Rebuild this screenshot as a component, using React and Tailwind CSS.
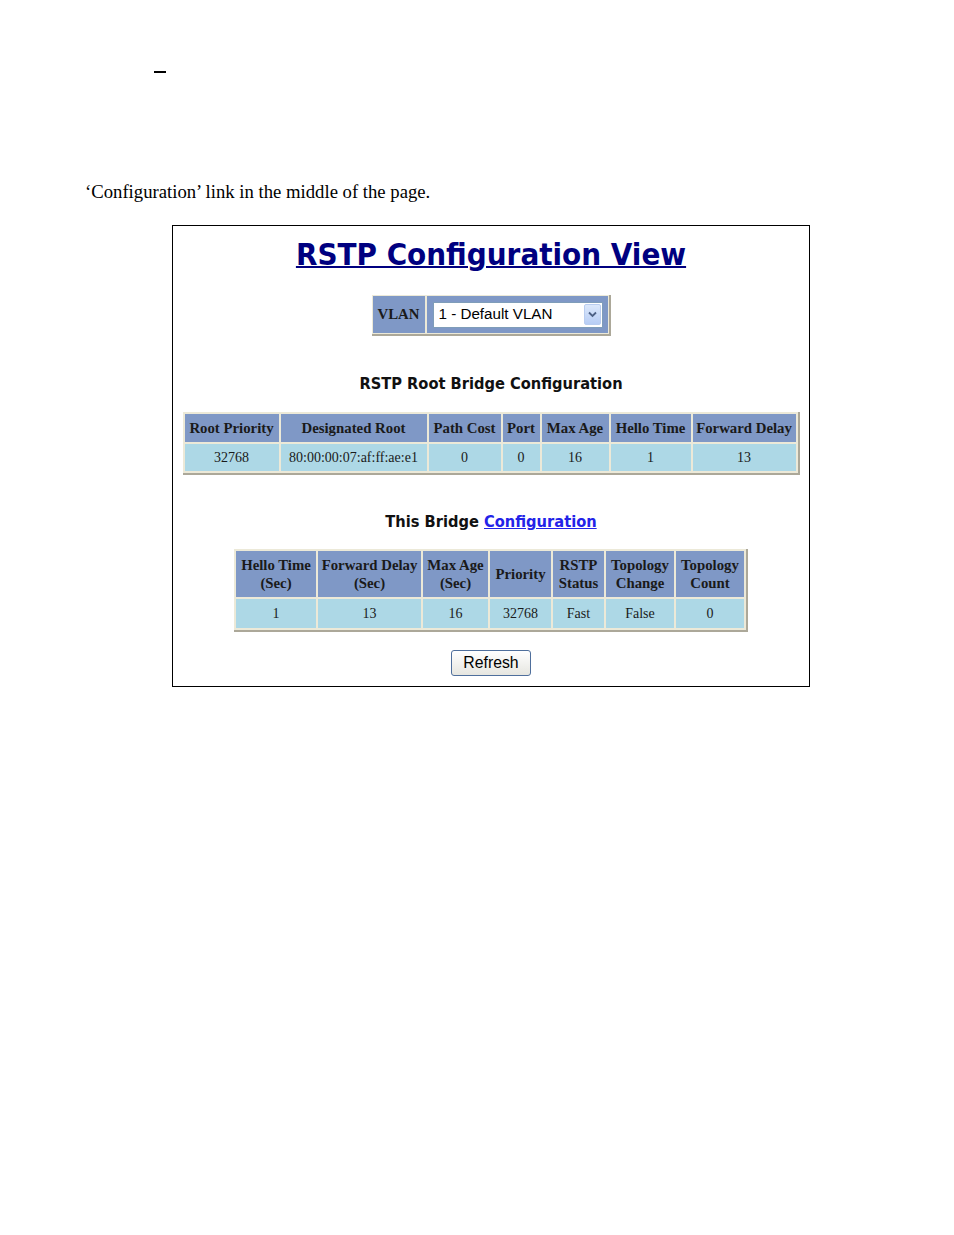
import React from "react";

const serif = { fontFamily: '"Liberation Serif", "Times New Roman", serif' };
const tah = { fontFamily: '"DejaVu Sans Condensed", "DejaVu Sans", Verdana, sans-serif' };
const arial = { fontFamily: '"Liberation Sans", Arial, sans-serif' };

function DataTable({ cols, rows, headH, rowH }) {
  return (
    <table
      className="border-separate border-spacing-[2px] bg-[#ece9d8] border-r-2 border-b-2 border-[#aca899]"
      style={serif}
    >
      <thead>
        <tr>
          {cols.map((c, i) => (
            <th
              key={i}
              className={`bg-[#7f98c6] text-[#1a1a1a] font-bold text-[14.8px] leading-[18px] px-[2px] text-center ${headH}`}
              style={{ width: c.w }}
            >
              {c.label}
            </th>
          ))}
        </tr>
      </thead>
      <tbody>
        <tr>
          {rows.map((v, i) => (
            <td
              key={i}
              className={`bg-[#add8e6] text-[#1a1a1a] text-[14px] px-[2px] text-center ${rowH}`}
            >
              {v}
            </td>
          ))}
        </tr>
      </tbody>
    </table>
  );
}

export default function App() {
  const t1 = [
    { label: "Root Priority", w: 94 },
    { label: "Designated Root", w: 146 },
    { label: "Path Cost", w: 72 },
    { label: "Port", w: 37 },
    { label: "Max Age", w: 67 },
    { label: "Hello Time", w: 80 },
    { label: "Forward Delay", w: 103 },
  ];
  const t2 = [
    { label: <>Hello Time<br />(Sec)</>, w: 80 },
    { label: <>Forward Delay<br />(Sec)</>, w: 103 },
    { label: <>Max Age<br />(Sec)</>, w: 65 },
    { label: "Priority", w: 61 },
    { label: <>RSTP<br />Status</>, w: 51 },
    { label: <>Topology<br />Change</>, w: 68 },
    { label: <>Topology<br />Count</>, w: 68 },
  ];
  return (
    <div className="w-[954px] h-[1235px] bg-white relative">
      <div className="pt-[71px] pl-[154px]">
        <div className="w-[12px] h-[2px] bg-black" />
      </div>
      <div className="pt-[108px] pl-[85px] text-[18.7px] leading-[22px] text-black" style={serif}>
        ‘Configuration’ link in the middle of the page.
      </div>
      <div className="mt-[22px] ml-[172px] w-[638px] h-[462px] border border-black flex flex-col items-center">
        <div
          className="mt-[12px] text-[#000080] font-bold text-[31px] leading-[32px] underline overline decoration-[1.5px]"
          style={tah}
        >
          RSTP Configuration View
        </div>
        <div className="mt-[25px] flex bg-[#ece9d8] p-[1px] border-r-2 border-b-2 border-[#aca899]">
          <div
            className="bg-[#7f98c6] w-[52px] h-[37px] flex items-center justify-center text-[14.8px] font-bold text-[#1a1a1a]"
            style={serif}
          >
            VLAN
          </div>
          <div className="ml-[2px] bg-[#7f98c6] w-[181px] h-[37px] flex items-center pl-[6px]">
            <div className="w-[170px] h-[26px] bg-white border border-[#7f9db9] flex items-center justify-between pl-[5px] pr-[1px]">
              <span className="text-[15.2px] text-black" style={arial}>
                1 - Default VLAN
              </span>
              <div className="w-[17px] h-[21px] rounded-[2px] bg-gradient-to-b from-[#dce8fb] to-[#b7cdf5] border border-[#b9cdf0] flex items-center justify-center">
                <svg width="9" height="7" viewBox="0 0 9 7">
                  <path d="M1 1.5 L4.5 5 L8 1.5" stroke="#4d6185" strokeWidth="1.8" fill="none" />
                </svg>
              </div>
            </div>
          </div>
        </div>
        <div className="mt-[38px] text-[16.3px] leading-[20px] font-bold text-[#111]" style={tah}>
          RSTP Root Bridge Configuration
        </div>
        <div className="mt-[18px]">
          <DataTable
            cols={t1}
            rows={["32768", "80:00:00:07:af:ff:ae:e1", "0", "0", "16", "1", "13"]}
            headH="h-[28px]"
            rowH="h-[27px]"
          />
        </div>
        <div className="mt-[37px] text-[16.3px] leading-[20px] font-bold text-[#111]" style={tah}>
          This Bridge <span className="text-[#2323e8] underline">Configuration</span>
        </div>
        <div className="mt-[17px]">
          <DataTable
            cols={t2}
            rows={["1", "13", "16", "32768", "Fast", "False", "0"]}
            headH="h-[46px]"
            rowH="h-[29px]"
          />
        </div>
        <button
          className="mt-[18px] w-[80px] h-[26px] rounded-[3px] border border-[#4f6f9c] bg-gradient-to-b from-white to-[#e6e6e0] text-[15.8px] text-black"
          style={arial}
        >
          Refresh
        </button>
      </div>
    </div>
  );
}
